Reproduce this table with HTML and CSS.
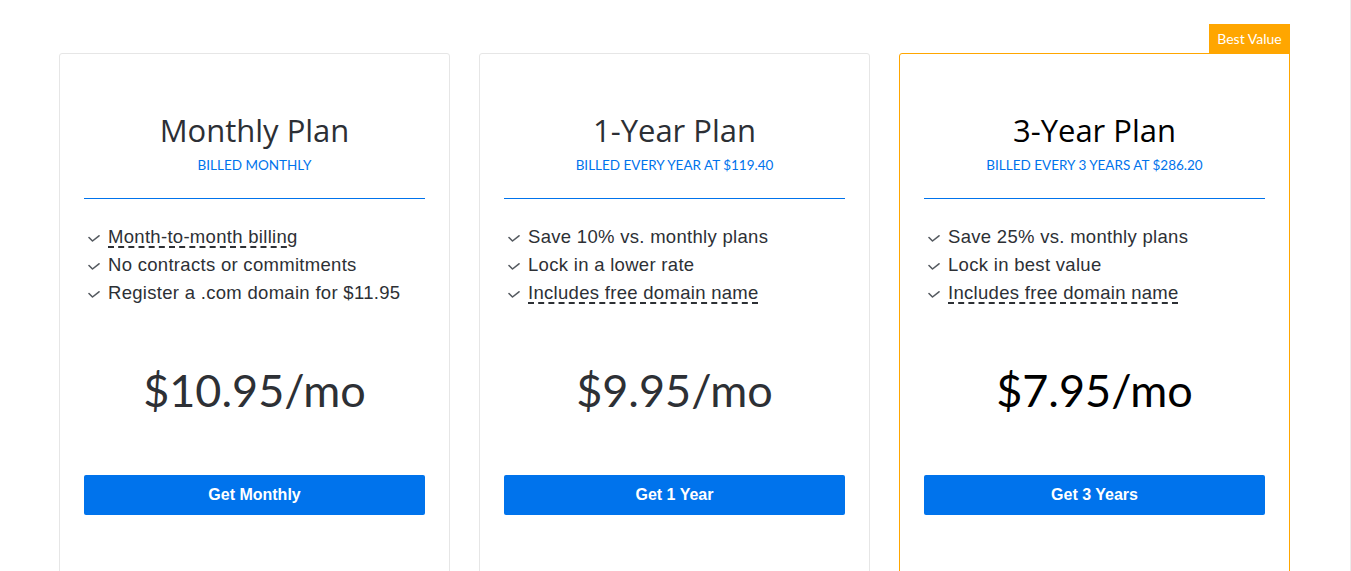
FILE: index.html
```html
<!DOCTYPE html>
<html lang="en">
<head>
<meta charset="utf-8">
<title>Plans</title>
<link rel="stylesheet" href="styles.css">
</head>
<body>
<div class="page">
  <div class="plans">
    <div class="card">
      <div class="card-head">
        <h2 class="title">Monthly Plan</h2>
        <div class="billed">BILLED MONTHLY</div>
      </div>
      <div class="divider"></div>
      <ul class="features">
        <li><svg class="check" viewBox="0 0 12 7"><polyline points="1,2.5 4.5,6 11,0.8"/></svg><span class="tip">Month-to-month billing</span></li>
        <li><svg class="check" viewBox="0 0 12 7"><polyline points="1,2.5 4.5,6 11,0.8"/></svg><span>No contracts or commitments</span></li>
        <li><svg class="check" viewBox="0 0 12 7"><polyline points="1,2.5 4.5,6 11,0.8"/></svg><span>Register a .com domain for $11.95</span></li>
      </ul>
      <div class="price">$10.95/mo</div>
      <a class="btn" href="#">Get Monthly</a>
    </div>
    <div class="card">
      <div class="card-head">
        <h2 class="title">1-Year Plan</h2>
        <div class="billed">BILLED EVERY YEAR AT $119.40</div>
      </div>
      <div class="divider"></div>
      <ul class="features">
        <li><svg class="check" viewBox="0 0 12 7"><polyline points="1,2.5 4.5,6 11,0.8"/></svg><span>Save 10% vs. monthly plans</span></li>
        <li><svg class="check" viewBox="0 0 12 7"><polyline points="1,2.5 4.5,6 11,0.8"/></svg><span>Lock in a lower rate</span></li>
        <li><svg class="check" viewBox="0 0 12 7"><polyline points="1,2.5 4.5,6 11,0.8"/></svg><span class="tip">Includes free domain name</span></li>
      </ul>
      <div class="price">$9.95/mo</div>
      <a class="btn" href="#">Get 1 Year</a>
    </div>
    <div class="card card-best">
      <div class="badge">Best Value</div>
      <div class="card-head">
        <h2 class="title">3-Year Plan</h2>
        <div class="billed">BILLED EVERY 3 YEARS AT $286.20</div>
      </div>
      <div class="divider"></div>
      <ul class="features">
        <li><svg class="check" viewBox="0 0 12 7"><polyline points="1,2.5 4.5,6 11,0.8"/></svg><span>Save 25% vs. monthly plans</span></li>
        <li><svg class="check" viewBox="0 0 12 7"><polyline points="1,2.5 4.5,6 11,0.8"/></svg><span>Lock in best value</span></li>
        <li><svg class="check" viewBox="0 0 12 7"><polyline points="1,2.5 4.5,6 11,0.8"/></svg><span class="tip">Includes free domain name</span></li>
      </ul>
      <div class="price">$7.95/mo</div>
      <a class="btn" href="#">Get 3 Years</a>
    </div>
  </div>
</div>
</body>
</html>
```

FILE: styles.css
```css
* { box-sizing: border-box; }
html, body { margin: 0; padding: 0; background: #fff; }
body { font-family: "Lato", "Liberation Sans", sans-serif; color: #2d3035; overflow: hidden; }

.page {
  width: 1351px;
  height: 100vh;
  border-right: 1px solid #ececec;
  padding: 53px 0 0 59px;
}

.plans {
  display: flex;
  gap: 29px;
  align-items: flex-start;
}

.card {
  position: relative;
  width: 391px;
  height: 560px;
  border: 1px solid #e6e6e6;
  border-radius: 3px;
  padding: 56px 24px 0;
  display: flex;
  flex-direction: column;
}
.card-best { border-color: #ffa600; border-top-right-radius: 0; }

.badge {
  position: absolute;
  top: -30px;
  right: -1px;
  width: 81px;
  height: 30px;
  background: #ffa600;
  color: #fff;
  font-size: 14px;
  line-height: 30px;
  text-align: center;
}

.card-head {
  text-align: center;
  padding-bottom: 24px;
}
.title {
  margin: 0;
  font-family: "Open Sans", "Noto Sans", sans-serif;
  font-weight: 400;
  font-size: 31px;
  line-height: 40px;
  color: #2c2f35;
}
.card-best .title { color: #000; }
.billed {
  margin-top: 6px;
  font-size: 13.5px;
  line-height: 18px;
  color: #0073ec;
}

.divider {
  height: 1px;
  background: #0073ec;
}

.features {
  list-style: none;
  margin: 24px 0 0;
  padding: 0 0 0 4px;
}
.features li {
  display: flex;
  align-items: center;
  gap: 8px;
  font-family: "Liberation Sans", Arial, sans-serif;
  font-size: 18.5px;
  letter-spacing: 0.3px;
  line-height: 28px;
  color: #2d3035;
}
.check {
  width: 12px;
  height: 7px;
  flex: none;
  margin-top: 3px;
  fill: none;
  stroke: #555a60;
  stroke-width: 1.6;
  stroke-linecap: round;
  stroke-linejoin: round;
}
.tip {
  text-decoration: underline dashed #2d3035;
  text-decoration-thickness: 1.5px;
  text-underline-offset: 3px;
}

.price {
  margin-top: 61px;
  text-align: center;
  font-size: 45px;
  line-height: 44px;
  color: #2d3035;
}
.card-best .price { color: #000; }

.btn {
  display: block;
  margin-top: 63px;
  height: 40px;
  line-height: 40px;
  background: #0073ec;
  border-radius: 2px;
  color: #fff;
  text-align: center;
  text-decoration: none;
  font-family: "Liberation Sans", Arial, sans-serif;
  font-weight: 700;
  font-size: 16px;
}
```
